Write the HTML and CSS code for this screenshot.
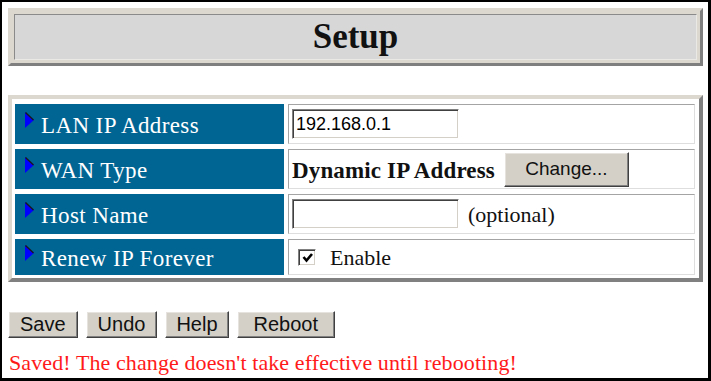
FILE: index.html
```html
<!DOCTYPE html>
<html lang="en">

<head>
    <meta charset="UTF-8">
    <meta name="viewport" content="width=device-width, initial-scale=1.0">
    <title>Setup</title>
    <link rel="stylesheet" href="styles.css">
</head>

<body>
    <div class="frame">
        <div class="head">
            <div class="head-in">Setup</div>
        </div>

        <div class="setup">
            <div class="row">
                <div class="label">
                    <svg class="arrow" width="9" height="16" viewBox="0 0 9 16"><polygon points="0,0 9,8 0,16" fill="#0000ff"/><line x1="0.5" y1="0.5" x2="8.5" y2="8" stroke="#1a1a1a" stroke-width="1.4"/></svg>
                    LAN IP Address
                </div>
                <div class="value">
                    <input class="field" type="text" value="192.168.0.1">
                </div>
            </div>

            <div class="row">
                <div class="label">
                    <svg class="arrow" width="9" height="16" viewBox="0 0 9 16"><polygon points="0,0 9,8 0,16" fill="#0000ff"/><line x1="0.5" y1="0.5" x2="8.5" y2="8" stroke="#1a1a1a" stroke-width="1.4"/></svg>
                    WAN Type
                </div>
                <div class="value">
                    <b class="wan">Dynamic IP Address</b>
                    <button class="btn change" type="button">Change...</button>
                </div>
            </div>

            <div class="row">
                <div class="label">
                    <svg class="arrow" width="9" height="16" viewBox="0 0 9 16"><polygon points="0,0 9,8 0,16" fill="#0000ff"/><line x1="0.5" y1="0.5" x2="8.5" y2="8" stroke="#1a1a1a" stroke-width="1.4"/></svg>
                    Host Name
                </div>
                <div class="value">
                    <input class="field" type="text" value="">
                    <span class="note">(optional)</span>
                </div>
            </div>

            <div class="row short">
                <div class="label">
                    <svg class="arrow" width="9" height="16" viewBox="0 0 9 16"><polygon points="0,0 9,8 0,16" fill="#0000ff"/><line x1="0.5" y1="0.5" x2="8.5" y2="8" stroke="#1a1a1a" stroke-width="1.4"/></svg>
                    Renew IP Forever
                </div>
                <div class="value">
                    <span class="check"><svg width="13" height="13" viewBox="0 0 13 13"><polyline points="2.5,6 5.5,9.5 11,3" fill="none" stroke="#000" stroke-width="2.6"/></svg></span>
                    <span class="note">Enable</span>
                </div>
            </div>
        </div>

        <div class="btns">
            <button class="btn b1" type="button">Save</button>
            <button class="btn b1" type="button">Undo</button>
            <button class="btn b1 slim" type="button">Help</button>
            <button class="btn b1 wide" type="button">Reboot</button>
        </div>

        <p class="msg">Saved! The change doesn't take effective until rebooting!</p>
    </div>
</body>

</html>
```

FILE: styles.css
```css
body {
    margin: 0;
    background: #fff;
    font-family: "Liberation Serif", "Times New Roman", serif;
}

.frame {
    width: 711px;
    height: 381px;
    box-sizing: border-box;
    border: solid #000;
    border-width: 2px 3px 3px 2px;
    padding: 6px 5px 0 6px;
    overflow: hidden;
}

/* title bar */
.head {
    border: 3px solid;
    border-color: #dcd8d0 #7f7f7f #7f7f7f #dcd8d0;
    padding: 3px;
    background: #dcd8d0;
}

.head-in {
    height: 44px;
    line-height: 44px;
    border: 1px solid;
    border-color: #8a8a8a #ebe9e5 #ebe9e5 #8a8a8a;
    background: #d7d7d7;
    text-align: center;
    font-size: 35px;
    font-weight: bold;
    color: #111;
}

/* settings table */
.setup {
    margin-top: 29px;
    border: 4px solid;
    border-color: #dcd8d0 #808080 #808080 #dcd8d0;
    padding: 5px 4px 3px 3px;
    display: flex;
    flex-direction: column;
    gap: 5px;
}

.row {
    display: flex;
    gap: 4px;
    height: 40px;
}

.short {
    height: 36px;
}

.label {
    width: 269px;
    box-sizing: border-box;
    background: #016594;
    color: #fff;
    font-size: 23px;
    letter-spacing: 0.4px;
    display: flex;
    align-items: center;
    padding: 3px 0 0 10px;
}

.arrow {
    align-self: flex-start;
    margin-top: 5px;
    margin-right: 7px;
    flex-shrink: 0;
}

.short .arrow {
    margin-top: 3px;
}

.value {
    flex: 1;
    box-sizing: border-box;
    border: 1px solid;
    border-color: #a4a4a4 #dedede #dedede #a4a4a4;
    display: flex;
    align-items: center;
    padding-left: 3px;
}

.field {
    width: 167px;
    height: 30px;
    box-sizing: border-box;
    margin: 0;
    border: 1px solid;
    border-color: #808080 #fff #fff #808080;
    box-shadow: inset 1px 1px #404040, inset -1px -1px #d4d0c8;
    padding: 0 3px;
    font-family: "Liberation Sans", Arial, sans-serif;
    font-size: 18px;
    color: #000;
}

.wan {
    margin-top: 3px;
    font-size: 23px;
    letter-spacing: 0.15px;
    color: #111;
}

.note {
    margin-left: 9px;
    margin-top: 2px;
    font-size: 22px;
    color: #111;
}

.check {
    width: 18px;
    height: 17px;
    box-sizing: border-box;
    margin-left: 6px;
    margin-right: 5px;
    border: 1px solid;
    border-color: #808080 #fff #fff #808080;
    box-shadow: inset 1px 1px #404040, inset -1px -1px #d4d0c8;
    background: #fff;
    display: flex;
    align-items: center;
    justify-content: center;
    flex-shrink: 0;
}

/* buttons */
.btn {
    margin: 0;
    background: #d4d0c8;
    border: 1px solid;
    border-color: #fff #404040 #404040 #fff;
    box-shadow: inset -1px -1px #808080, inset 1px 1px #e6e3de;
    font-family: "Liberation Sans", Arial, sans-serif;
    color: #111;
    cursor: pointer;
}

.change {
    margin-left: 9px;
    width: 125px;
    height: 35px;
    font-size: 19px;
}

.btns {
    margin-top: 29px;
    display: flex;
}

.b1 {
    height: 27px;
    padding: 0 11px;
    font-size: 20px;
    margin-right: 8px;
}

.slim {
    padding: 0 10px;
}

.wide {
    padding: 0 16px;
}

.msg {
    margin: 13px 0 0 1px;
    font-size: 22px;
    letter-spacing: 0.1px;
    line-height: 24px;
    color: #ff1a1a;
}
```
